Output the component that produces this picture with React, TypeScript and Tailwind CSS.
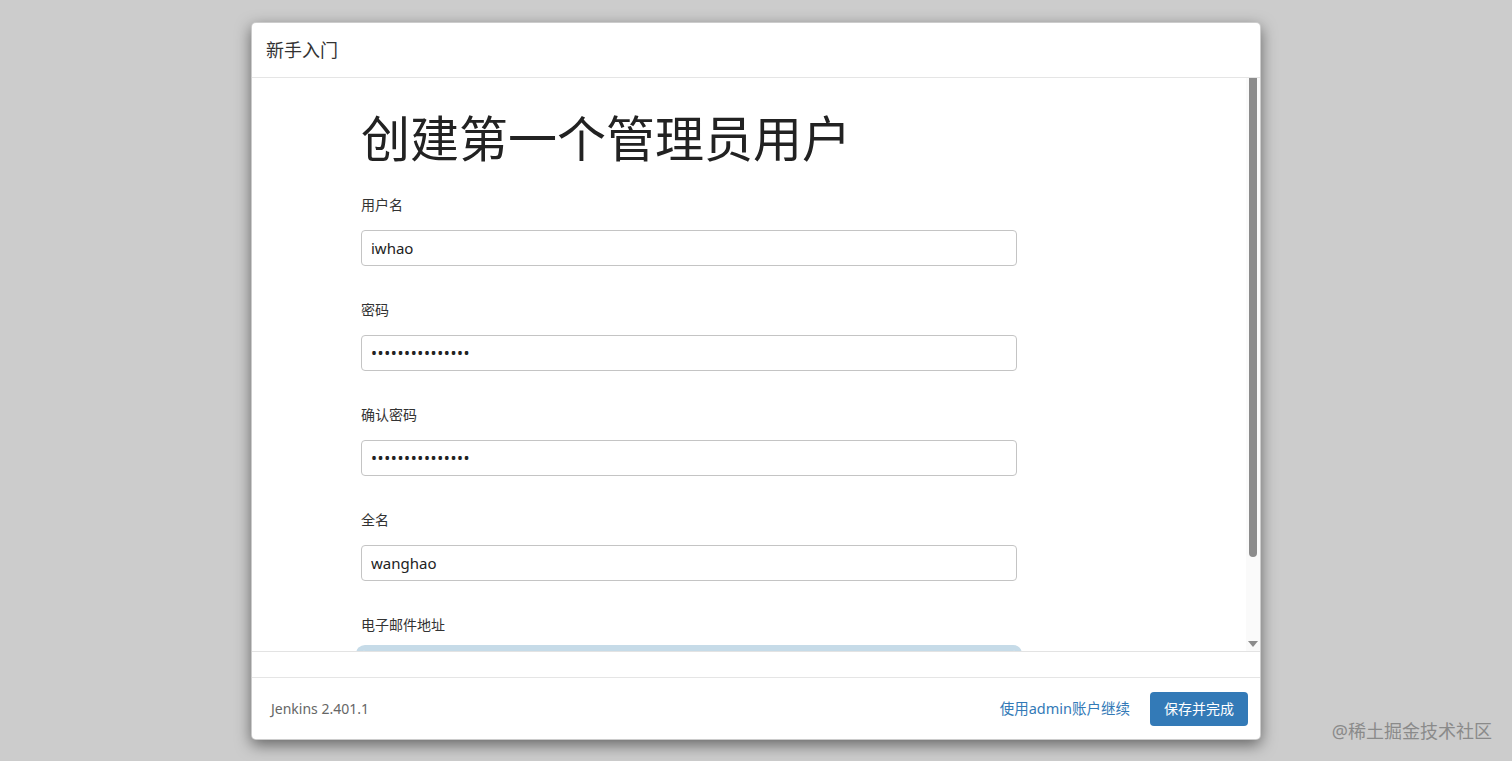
import React from "react";

const FONT = { fontFamily: '"Noto Sans", "Noto Sans CJK SC", sans-serif' };

type Field = { label: string; value: string; type: string };

const FIELDS: Field[] = [
  { label: "用户名", value: "iwhao", type: "text" },
  { label: "密码", value: "aaaaaaaaaaaaaaa", type: "password" },
  { label: "确认密码", value: "aaaaaaaaaaaaaaa", type: "password" },
  { label: "全名", value: "wanghao", type: "text" },
];

export default function App() {
  return (
    <div
      className="relative flex h-[761px] w-[1512px] justify-center overflow-hidden bg-[#cccccc] pt-[22px]"
      style={FONT}
    >
      <div className="flex h-[718px] w-[1010px] flex-col overflow-hidden rounded-[5px] border border-[rgba(0,0,0,0.2)] bg-white shadow-[0_5px_15px_rgba(0,0,0,0.5)]">
        {/* header */}
        <div className="flex h-[55px] shrink-0 items-center border-b border-[#e5e5e5] px-[14px]">
          <h4 className="text-[18px] leading-[24px] text-[#333]">新手入门</h4>
        </div>

        {/* scrolling body (iframe in jenkins) */}
        <div className="flex h-[574px] shrink-0 border-b border-[#e3e3e3]">
          <div className="min-w-0 flex-1 overflow-hidden pl-[109px] pt-[28px]">
            <h1 className="text-[49px] font-normal leading-[64px] text-[#222]">创建第一个管理员用户</h1>
            <div className="mt-[25px] flex flex-col">
              {FIELDS.map((f) => (
                <div key={f.label} className="flex flex-col pb-[34px]">
                  <label className="mb-[15px] text-[14px] leading-[20px] text-[#333]">{f.label}</label>
                  <input
                    readOnly
                    type={f.type}
                    defaultValue={f.value}
                    className={
                      f.type === "password"
                        ? "h-[36px] w-[656px] rounded-[4px] border border-[#c4c4c4] bg-white px-[9px] text-[16px] tracking-[0.6px] text-[#222] outline-none"
                        : "h-[36px] w-[656px] rounded-[4px] border border-[#c4c4c4] bg-white px-[9px] text-[15px] text-[#222] outline-none"
                    }
                    style={FONT}
                  />
                </div>
              ))}
              <div className="flex flex-col">
                <label className="mb-[15px] text-[14px] leading-[20px] text-[#333]">电子邮件地址</label>
                <div className="h-[36px] w-[656px] rounded-[4px] border border-[#c6dbe8] bg-white shadow-[0_0_0_5px_#c6dbe8]" />
              </div>
            </div>
          </div>
          {/* scrollbar */}
          <div className="flex w-[14px] shrink-0 flex-col items-center bg-[#fafafa] pr-[1px]">
            <div className="h-[479px] w-[8px] rounded-b-[4px] bg-[#8c8c8c]" />
            <div className="flex-1" />
            <div className="mb-[4px] h-0 w-0 border-x-[5px] border-t-[6px] border-x-transparent border-t-[#8c8c8c]" />
          </div>
        </div>

        <div className="h-[25px] shrink-0" />

        {/* footer */}
        <div className="flex flex-1 items-center justify-between border-t border-[#e5e5e5] pl-[19px] pr-[12px]">
          <span className="text-[14px] text-[#666]">Jenkins 2.401.1</span>
          <div className="flex items-center gap-[20px]">
            <a className="text-[14.5px] text-[#337ab7]">使用admin账户继续</a>
            <button className="h-[34px] rounded-[4px] bg-[#337ab7] px-[14px] text-[14px] text-white">保存并完成</button>
          </div>
        </div>
      </div>

      <div className="absolute bottom-[18px] right-[20px] text-[18px] leading-[24px] text-[#8a8a8a]">@稀土掘金技术社区</div>
    </div>
  );
}
